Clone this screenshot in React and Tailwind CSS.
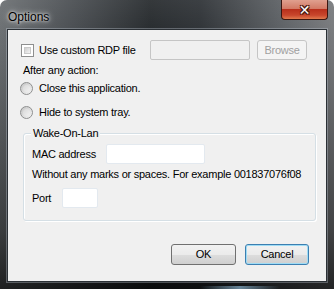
import React from "react";

const font = { fontFamily: '"Liberation Sans", Arial, sans-serif' };

function Checkbox() {
  return (
    <div className="w-[13px] h-[13px] border border-[#8e8f8f] bg-white p-[2px] shrink-0">
      <div className="w-full h-full border border-[#c9c9c9] bg-gradient-to-br from-[#cfcfcf] to-[#f4f4f4]" />
    </div>
  );
}

function Radio() {
  return (
    <div className="w-[13px] h-[13px] rounded-full border border-[#8e8f8f] bg-gradient-to-br from-[#c4c4c4] to-[#f6f6f6] shrink-0 flex items-center justify-center">
      <div className="w-[7px] h-[7px] rounded-full bg-gradient-to-br from-[#d8d8d8] to-[#f2f2f2]" />
    </div>
  );
}

export default function App() {
  return (
    <div
      className="w-[334px] h-[289px] relative overflow-hidden rounded-t-[7px] flex flex-col text-[11px] tracking-[-0.25px] text-black whitespace-nowrap"
      style={font}
    >
      <div className="absolute inset-0 bg-[linear-gradient(to_right,#6a6e71,#4a4e52_20%,#24282b_45%,#2c3034_60%,#5c6064_85%,#77797c)]" />
      <div className="absolute inset-0 bg-[linear-gradient(to_bottom,rgba(255,255,255,0.08),rgba(0,0,0,0)_15%,rgba(0,0,0,0.45)_80%,rgba(0,0,0,0.7))]" />
      <div className="absolute left-[200px] bottom-0 w-[80px] h-[3px] bg-[linear-gradient(to_right,transparent,#8ab4d0,transparent)] opacity-70" />

      {/* title bar */}
      <div className="relative h-[29px] flex items-start justify-between">
        <span className="ml-[8px] mt-[8px] text-[12px] tracking-normal text-black [text-shadow:0_0_6px_rgba(255,255,255,0.9),0_0_3px_rgba(255,255,255,0.9)]">
          Options
        </span>
        <div className="mr-[6px] w-[47px] h-[20px] rounded-b-[4px] border border-t-0 border-[#3b1610] bg-[linear-gradient(to_bottom,#e0a08f,#d27a66_45%,#b9301c_50%,#c8462c_80%,#e07a4e)] flex items-center justify-center">
          <span
            className="text-white text-[14px] font-bold leading-none [text-shadow:0_0_1px_#4a1a10,1px_1px_0_#4a1a10,-1px_-1px_0_#4a1a10,1px_-1px_0_#4a1a10,-1px_1px_0_#4a1a10]"
            style={{ fontFamily: '"DejaVu Sans", sans-serif' }}
          >
            ✕
          </span>
        </div>
      </div>

      {/* client area */}
      <div className="relative ml-[7px] w-[320px] h-[253px] border border-[#2b3035] bg-[#f0f0f0] shadow-[0_0_0_1px_rgba(200,210,220,0.35)]">
        {/* row 1 */}
        <div className="flex items-center h-[20px] mt-[10px]">
          <div className="ml-[13px]">
            <Checkbox />
          </div>
          <span className="ml-[5px] w-[111px]">Use custom RDP file</span>
          <div className="w-[100px] h-[20px] border border-[#c5c5c5] rounded-[2px] bg-[#f0f0f0]" />
          <div className="ml-[7px] w-[50px] h-[20px] border border-[#c5c5c5] rounded-[3px] bg-[#f4f4f4] flex items-center justify-center text-[#a0a0a0]">
            Browse
          </div>
        </div>

        <div className="ml-[15px] mt-[3px] h-[14px] leading-[14px]">After any action:</div>

        <div className="flex items-center ml-[12px] mt-[4px] h-[14px]">
          <Radio />
          <span className="ml-[6px]">Close this application.</span>
        </div>
        <div className="flex items-center ml-[12px] mt-[10px] h-[14px]">
          <Radio />
          <span className="ml-[6px]">Hide to system tray.</span>
        </div>

        {/* group box */}
        <div className="relative ml-[15px] mt-[14px] w-[293px] h-[88px] rounded-[3px] border border-[#d5dfe5] shadow-[inset_1px_1px_0_#ffffff,1px_1px_0_#ffffff]">
          <span className="absolute left-[7px] top-[-8px] px-[2px] bg-[#f0f0f0] leading-[14px]">
            Wake-On-Lan
          </span>
          <div className="flex items-center mt-[10px] h-[20px]">
            <span className="ml-[8px] w-[74px]">MAC address</span>
            <div className="w-[99px] h-[20px] bg-white border border-[#e3e9ef] rounded-[2px]" />
          </div>
          <div className="ml-[8px] mt-[3px] h-[14px] leading-[14px]">
            Without any marks or spaces. For example 001837076f08
          </div>
          <div className="flex items-center mt-[7px] h-[20px]">
            <span className="ml-[8px] w-[30px]">Port</span>
            <div className="w-[36px] h-[20px] bg-white border border-[#e3e9ef] rounded-[2px]" />
          </div>
        </div>

        {/* buttons */}
        <div className="flex justify-end mt-[23px] mr-[17px] gap-[9px]">
          <div className="w-[65px] h-[21px] rounded-[3px] border border-[#707070] bg-[linear-gradient(to_bottom,#f2f2f2,#ebebeb_50%,#dddddd_51%,#cfcfcf)] flex items-center justify-center">
            OK
          </div>
          <div className="w-[64px] h-[21px] rounded-[3px] border border-[#3c7fb1] shadow-[inset_0_0_0_1px_#9fdcf5] bg-[linear-gradient(to_bottom,#f2f2f2,#ebebeb_50%,#dddddd_51%,#cfcfcf)] flex items-center justify-center">
            Cancel
          </div>
        </div>
      </div>
    </div>
  );
}
